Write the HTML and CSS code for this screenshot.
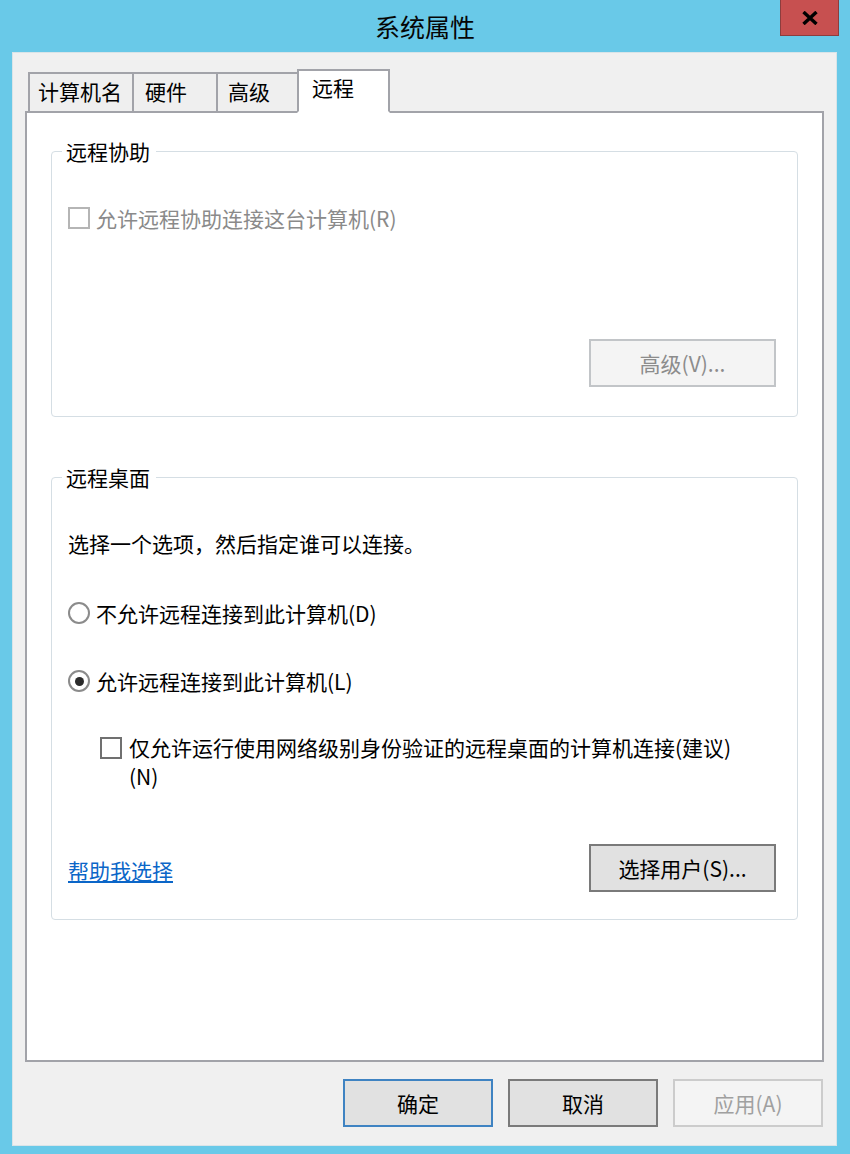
FILE: index.html
```html
<!DOCTYPE html>
<html lang="zh-CN">
<head>
<meta charset="utf-8">
<title>系统属性</title>
<link rel="stylesheet" href="styles.css">
</head>
<body>
<div class="window">
  <header class="titlebar">
    <div class="title-spacer"></div>
    <h1 class="title">系统属性</h1>
    <div class="title-controls">
      <button class="close" aria-label="关闭">
        <svg width="16" height="14" viewBox="0 0 16 14"><path d="M1.5 1 L14.5 13 M14.5 1 L1.5 13" stroke="#000" stroke-width="3.4" fill="none"/></svg>
      </button>
    </div>
  </header>
  <div class="client">
    <div class="tabs">
      <div class="tab tab-1">计算机名</div>
      <div class="tab tab-2">硬件</div>
      <div class="tab tab-3">高级</div>
      <div class="tab tab-4 active">远程</div>
    </div>
    <div class="panel">
      <fieldset class="group group-assist">
        <legend>远程协助</legend>
        <label class="check disabled"><span class="box"></span><span>允许远程协助连接这台计算机(R)</span></label>
        <div class="row-end"><button class="btn disabled">高级(V)...</button></div>
      </fieldset>
      <fieldset class="group group-desktop">
        <legend>远程桌面</legend>
        <p class="intro">选择一个选项，然后指定谁可以连接。</p>
        <label class="radio radio-1"><span class="ring"></span><span>不允许远程连接到此计算机(D)</span></label>
        <label class="radio radio-2 checked"><span class="ring"><span class="dot"></span></span><span>允许远程连接到此计算机(L)</span></label>
        <label class="check nla"><span class="box"></span><span class="nla-text">仅允许运行使用网络级别身份验证的远程桌面的计算机连接(建议)<br>(N)</span></label>
        <div class="row-between">
          <a class="link" href="#">帮助我选择</a>
          <button class="btn">选择用户(S)...</button>
        </div>
      </fieldset>
    </div>
    <div class="footer">
      <button class="btn small default">确定</button>
      <button class="btn small">取消</button>
      <button class="btn small disabled">应用(A)</button>
    </div>
  </div>
</div>
</body>
</html>
```

FILE: styles.css
```css
* { box-sizing: border-box; }
html, body { margin: 0; padding: 0; }
body {
  width: 850px;
  height: 1154px;
  overflow: hidden;
  background: #69c9e8;
  font-family: "Noto Sans CJK SC", "Noto Sans", sans-serif;
  font-size: 21px;
  line-height: 28px;
  color: #000;
}
.window {
  width: 850px;
  height: 1154px;
  display: flex;
  flex-direction: column;
}
.titlebar {
  height: 52px;
  flex: none;
  display: grid;
  grid-template-columns: 1fr auto 1fr;
  align-items: start;
}
.title {
  margin: 0;
  padding-top: 11px;
  font-size: 25px;
  font-weight: normal;
  line-height: 30px;
  color: #050505;
}
.title-controls {
  display: flex;
  justify-content: flex-end;
  padding-right: 11px;
}
.close {
  width: 59px;
  height: 36px;
  padding: 0;
  margin: 0;
  background: #c75050;
  border: 1px solid #8d3d3d;
  border-top: 0;
  display: flex;
  align-items: center;
  justify-content: center;
}
.client {
  flex: none;
  height: 1094px;
  margin: 0 13px 0 12px;
  background: #f0f0f0;
  border: 1px solid #d9e4e8;
  padding: 16px 12px 18px 12px;
  display: flex;
  flex-direction: column;
}
.tabs {
  display: flex;
  align-items: flex-end;
  height: 44px;
  margin-left: 3px;
  margin-bottom: -2px;
  position: relative;
  z-index: 1;
}
.tab {
  height: 41px;
  border: 2px solid #a2a3a9;
  background: #efefef;
  margin-left: -2px;
  padding-top: 3px;
  white-space: nowrap;
}
.tab-1 { margin-left: 0; width: 106px; padding-left: 8px; }
.tab-2 { width: 86px; padding-left: 11px; }
.tab-3 { width: 83px; padding-left: 10px; }
.tab-4 { width: 93px; padding-left: 13px; }
.tab.active {
  height: 44px;
  padding-top: 2px;
  background: #fff;
  border-bottom-color: #fff;
}
.panel {
  flex: 1;
  background: #fff;
  border: 2px solid #a2a3a9;
  padding: 0 24px;
}
.group {
  margin: 0;
  min-width: 0;
  border: 1px solid #d5dee4;
  border-radius: 4px;
  padding: 39px 21px 29px 16px;
}
.group legend {
  margin-left: -6px;
  padding: 0 6px 0 4px;
  line-height: 28px;
}
.group-assist { margin-top: 24px; }
.group-desktop {
  margin-top: 46px;
  padding-top: 38px;
  padding-bottom: 27px;
}
.check, .radio {
  display: flex;
  align-items: center;
  gap: 6px;
}
.box {
  width: 22px;
  height: 22px;
  flex: none;
  background: #fff;
  border: 2px solid #707070;
}
.check.disabled { color: #8a8a8a; }
.check.disabled .box { border-color: #b5b5b5; }
.row-end {
  display: flex;
  justify-content: flex-end;
  margin-top: 107px;
}
.btn {
  width: 187px;
  height: 48px;
  margin: 0;
  padding: 0;
  font: inherit;
  color: #000;
  background: #e1e1e1;
  border: 2px solid #7a7a7a;
}
.btn.disabled {
  color: #8c8c8c;
  background: #f4f4f4;
  border-color: #c2c5c8;
}
.intro { margin: 0; }
.radio-1 { margin-top: 42px; }
.radio-2 { margin-top: 40px; }
.ring {
  width: 22px;
  height: 22px;
  flex: none;
  border: 2px solid #8b8b8b;
  border-radius: 50%;
  background: #fff;
  display: flex;
  align-items: center;
  justify-content: center;
}
.dot {
  width: 9px;
  height: 9px;
  border-radius: 50%;
  background: #2b2b2b;
}
.check.nla {
  align-items: flex-start;
  margin-top: 38px;
  margin-left: 32px;
  gap: 7px;
  line-height: 29px;
}
.check.nla .box { margin-top: 4px; }
.row-between {
  display: flex;
  justify-content: space-between;
  align-items: center;
  margin-top: 53px;
}
.link {
  color: #0b66c8;
  text-decoration: underline;
  margin-top: 4px;
}
.footer {
  display: flex;
  justify-content: flex-end;
  gap: 15px;
  margin-top: 17px;
  padding-right: 1px;
}
.btn.small { width: 150px; }
.btn.default { border-color: #3f83c2; }
.btn.disabled.small { border-color: #cccccc; color: #a0a0a0; }
```
